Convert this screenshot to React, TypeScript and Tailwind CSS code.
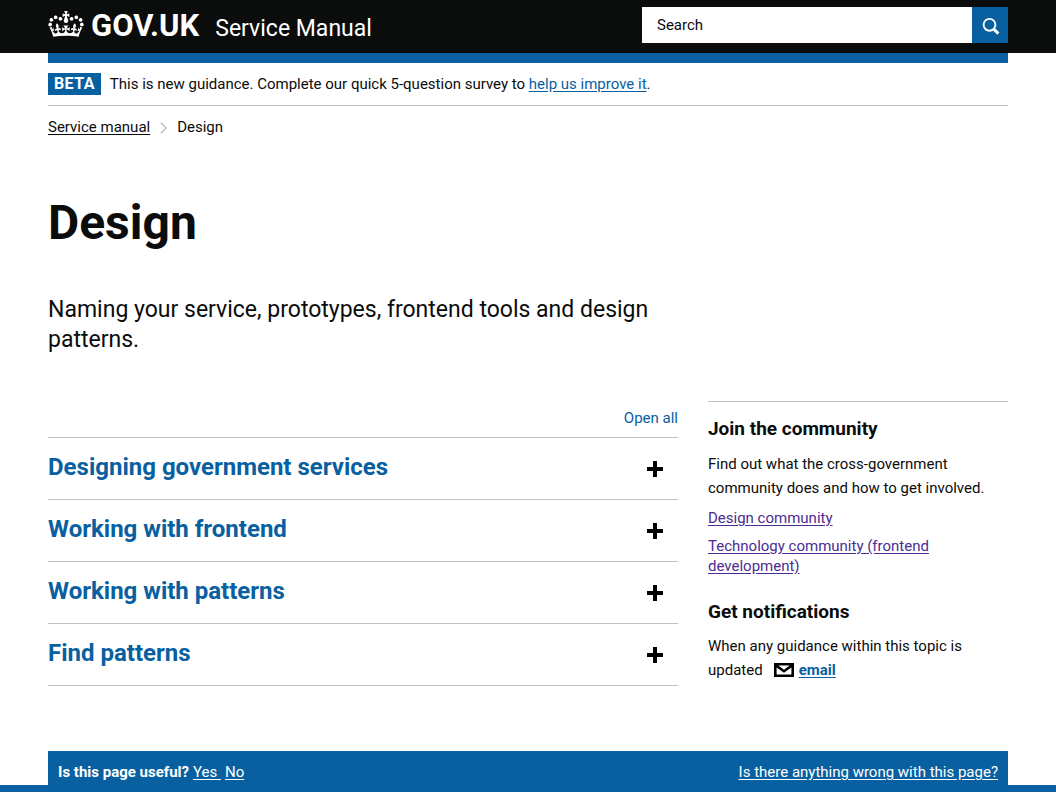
const topics = [
  'Designing government services',
  'Working with frontend',
  'Working with patterns',
  'Find patterns',
];

function Crown() {
  return (
    <svg viewBox="0 0 132 97" className="h-[26px] w-9 shrink-0" fill="currentColor" aria-hidden="true">
      <path
        fillRule="evenodd"
        d="M25 30.2c3.5 1.5 7.7-.2 9.1-3.7 1.5-3.6-.2-7.8-3.9-9.2-3.6-1.4-7.6.3-9.1 3.9-1.4 3.5.3 7.5 3.9 9zM9 39.5c3.6 1.5 7.8-.2 9.2-3.7 1.5-3.6-.2-7.8-3.9-9.1-3.6-1.5-7.6.2-9.1 3.8-1.4 3.5.3 7.5 3.8 9zM4.4 57.2c3.5 1.5 7.7-.2 9.1-3.8 1.5-3.6-.2-7.7-3.9-9.1-3.5-1.5-7.6.3-9.1 3.8-1.4 3.5.3 7.6 3.9 9.1zm38.3-21.4c3.5 1.5 7.7-.2 9.1-3.8 1.5-3.6-.2-7.7-3.9-9.1-3.6-1.5-7.6.3-9.1 3.8-1.3 3.6.4 7.7 3.9 9.1zm64.4-5.6c-3.6 1.5-7.8-.2-9.1-3.7-1.5-3.6.2-7.8 3.8-9.2 3.6-1.4 7.7.3 9.2 3.9 1.3 3.5-.4 7.5-3.9 9zm15.9 9.3c-3.6 1.5-7.7-.2-9.1-3.7-1.5-3.6.2-7.8 3.7-9.1 3.6-1.5 7.7.2 9.2 3.8 1.5 3.5-.3 7.5-3.8 9zm4.7 17.7c-3.6 1.5-7.8-.2-9.2-3.8-1.5-3.6.2-7.7 3.9-9.1 3.6-1.5 7.7.3 9.2 3.8 1.3 3.5-.4 7.6-3.9 9.1zM89.3 35.8c-3.6 1.5-7.8-.2-9.2-3.8-1.4-3.6.2-7.7 3.9-9.1 3.6-1.5 7.7.3 9.2 3.8 1.4 3.6-.3 7.7-3.9 9.1zM69.7 17.7l8.9 4.7V9.3l-8.9 2.8c-.2-.3-.5-.6-.9-.9L72.4 0H59.6l3.5 11.2c-.3.3-.6.5-.9.9l-8.8-2.8v13.1l8.8-4.7c.3.3.6.7.9.9l-5 15.4v.1c-.2.8-.4 1.6-.4 2.4 0 4.1 3.1 7.5 7 8.1h.2c.3 0 .7.1 1 .1.4 0 .7 0 1-.1h.2c4-.6 7.1-4.1 7.1-8.1 0-.8-.1-1.7-.4-2.4V34l-5.1-15.4c.4-.2.7-.6 1-.9zM66 92.8c16.9 0 32.8 1.1 47.1 3.2 4-16.9 8.9-26.7 14-33.5l-9.6-3.4c1 4.9 1.1 7.2 0 10.2-1.5-1.4-3-4.3-4.2-8.7L108.6 76c2.8-2 5-3.2 7.5-3.3-4.4 9.4-10 11.9-13.6 11.2-4.3-.8-6.3-4.6-5.6-7.9 1-4.7 5.7-5.9 8-.5 4.3-8.7-3-11.4-7.6-8.8 7.1-7.2 7.9-13.5 2.1-21.1-8 6.1-8.1 12.3-4.5 20.8-4.7-5.4-12.1-2.5-9.5 6.2 3.4-5.2 7.9-2 7.2 3.1-.6 4.3-6.4 7.8-13.5 7.2-10.3-.9-10.9-8-11.2-13.8 2.5-.5 7.1 1.8 11 7.3L80.2 60c-4.1 4.4-8 5.3-12.3 5.4 1.4-4.4 8-11.6 8-11.6H55.5s6.4 7.2 7.9 11.6c-4.2-.1-8-1-12.3-5.4l1.4 16.4c3.9-5.5 8.5-7.7 10.9-7.3-.3 5.8-.9 12.8-11.1 13.8-7.2.6-12.9-2.9-13.5-7.2-.7-5 3.8-8.3 7.1-3.1 2.7-8.7-4.6-11.6-9.4-6.2 3.7-8.5 3.6-14.7-4.6-20.8-5.8 7.6-5 13.9 2.2 21.1-4.7-2.6-11.9.1-7.7 8.8 2.3-5.5 7.1-4.2 8.1.5.7 3.3-1.3 7.1-5.7 7.9-3.5.7-9-1.8-13.5-11.2 2.5.1 4.7 1.3 7.5 3.3l-4.7-15.4c-1.2 4.4-2.7 7.2-4.3 8.7-1.1-3-.9-5.3 0-10.2l-9.5 3.4c5 6.9 9.9 16.7 14 33.5 14.8-2.1 30.8-3.2 47.7-3.2z"
      />
    </svg>
  );
}

function Header() {
  return (
    <header className="bg-[#0b0c0c] text-white">
      <div className="mx-auto flex max-w-[960px] items-start justify-between pt-[7px] pb-[6px]">
        <div className="flex items-start gap-4">
          <a href="#home" className="flex items-start gap-[7px] pt-1">
            <Crown />
            <span className="text-[31px] leading-[30px] font-bold">GOV.UK</span>
          </a>
          <a href="#manual" className="pt-1 text-[23px] leading-9">
            Service Manual
          </a>
        </div>
        <form className="flex h-9 w-[366px]" role="search">
          <input
            type="search"
            aria-label="Search"
            placeholder="Search"
            className="min-w-0 flex-1 bg-white px-[15px] text-[15px] text-[#0b0c0c] placeholder:text-[#0b0c0c] placeholder:opacity-100"
          />
          <button type="submit" aria-label="Submit search" className="flex w-9 items-center justify-center bg-[#0860a1] pt-[2px] pl-[2px]">
            <svg viewBox="0 0 18 18" className="size-[18px]" fill="none" stroke="white" aria-hidden="true">
              <circle cx="7.5" cy="7.8" r="5.9" strokeWidth="1.9" />
              <path d="M11.8 12.1 16.4 16.6" strokeWidth="2.9" />
            </svg>
          </button>
        </form>
      </div>
    </header>
  );
}

function TopicList() {
  return (
    <section className="mt-[51px]">
      <div className="flex justify-end pb-[7px]">
        <button type="button" className="text-[15px] leading-6 text-[#0860a1]">
          Open all
        </button>
      </div>
      <div className="border-t border-[#bfc1c3]">
        {topics.map((topic) => (
          <h2 key={topic} className="border-b border-[#bfc1c3]">
            <button
              type="button"
              aria-expanded="false"
              className="flex w-full items-center justify-between pt-[14px] pr-[15px] pb-[17px] text-left text-2xl leading-[30px] font-bold text-[#0860a1]"
            >
              {topic}
              <svg viewBox="0 0 16 16" className="mt-1 size-4 text-black" fill="currentColor" aria-hidden="true">
                <path d="M6 0h4v6h6v4h-6v6H6v-6H0V6h6z" />
              </svg>
            </button>
          </h2>
        ))}
      </div>
    </section>
  );
}

function Sidebar() {
  return (
    <aside className="self-start border-t border-[#bfc1c3] pt-[15px]">
      <h2 className="text-[19px] leading-6 font-bold">Join the community</h2>
      <p className="mt-[11px] leading-6">Find out what the cross-government community does and how to get involved.</p>
      <ul className="mt-2 flex flex-col gap-2 leading-5 text-[#4c2c92]">
        <li>
          <a href="#design" className="underline underline-offset-2">
            Design community
          </a>
        </li>
        <li>
          <a href="#technology" className="underline underline-offset-2">
            Technology community (frontend development)
          </a>
        </li>
      </ul>
      <h2 className="mt-6 text-[19px] leading-6 font-bold">Get notifications</h2>
      <p className="mt-[10px] leading-6">
        When any guidance within this topic is updated
        <svg viewBox="0 0 20 14" className="mr-[5px] ml-[11px] inline-block h-[14px] w-5 align-[-2px]" aria-hidden="true">
          <path d="M0 0h20v14H0z" fill="#000" />
          <path d="M2.6 4.6V11.6H17.4V4.6L10 9.8zM4.4 2.4 10 6.7 15.6 2.4z" fill="#fff" />
        </svg>
        <a href="#email" className="font-bold text-[#0860a1] underline underline-offset-2">
          email
        </a>
      </p>
    </aside>
  );
}

export default function App() {
  return (
    <div className="bg-white font-['Roboto',sans-serif] text-[15px] text-[#0b0c0c]">
      <Header />
      <div className="mx-auto max-w-[960px]">
        <div className="h-[10px] bg-[#0860a1]" />
        <div className="flex items-center gap-[9px] border-b border-[#bfc1c3] py-[10px] leading-[22px]">
          <strong className="bg-[#0860a1] px-[6px] text-base leading-[22px] tracking-wide text-white">BETA</strong>
          <p>
            This is new guidance. Complete our quick 5-question survey to{' '}
            <a href="#survey" className="text-[#0860a1] underline underline-offset-2">
              help us improve it
            </a>
            .
          </p>
        </div>
        <nav aria-label="Breadcrumb" className="pt-[11px] leading-5">
          <ol className="flex items-center">
            <li className="flex items-center">
              <a href="#manual" className="underline underline-offset-2">
                Service manual
              </a>
              <svg viewBox="0 0 7 12" className="mx-[10px] mt-[2px] h-3 w-[7px]" fill="none" stroke="#bfc1c3" aria-hidden="true">
                <path d="M1 .8 6 6 1 11.2" strokeWidth="1.4" />
              </svg>
            </li>
            <li>Design</li>
          </ol>
        </nav>
        <main className="grid grid-cols-[minmax(0,1fr)_300px] gap-x-[30px] pb-[65px]">
          <div>
            <h1 className="mt-[61px] text-5xl leading-[50px] font-bold">Design</h1>
            <p className="mt-[47px] text-[23px] leading-[30px]">
              Naming your service, prototypes, frontend tools and design patterns.
            </p>
            <TopicList />
          </div>
          <div className="flex flex-col pt-[264px]">
            <Sidebar />
          </div>
        </main>
        <div className="flex justify-between bg-[#0860a1] px-[10px] pt-[11px] pb-[2px] leading-[21px] text-white">
          <div className="flex items-center">
            <h2 className="font-bold">Is this page useful?</h2>
            <a href="#yes" className="ml-1 whitespace-pre underline underline-offset-2">
              {'Yes '}
            </a>
            <a href="#no" className="ml-1 underline underline-offset-2">
              No
            </a>
          </div>
          <a href="#problem" className="underline underline-offset-2">
            Is there anything wrong with this page?
          </a>
        </div>
      </div>
      <footer className="h-[7px] bg-[#0860a1]" />
    </div>
  );
}
